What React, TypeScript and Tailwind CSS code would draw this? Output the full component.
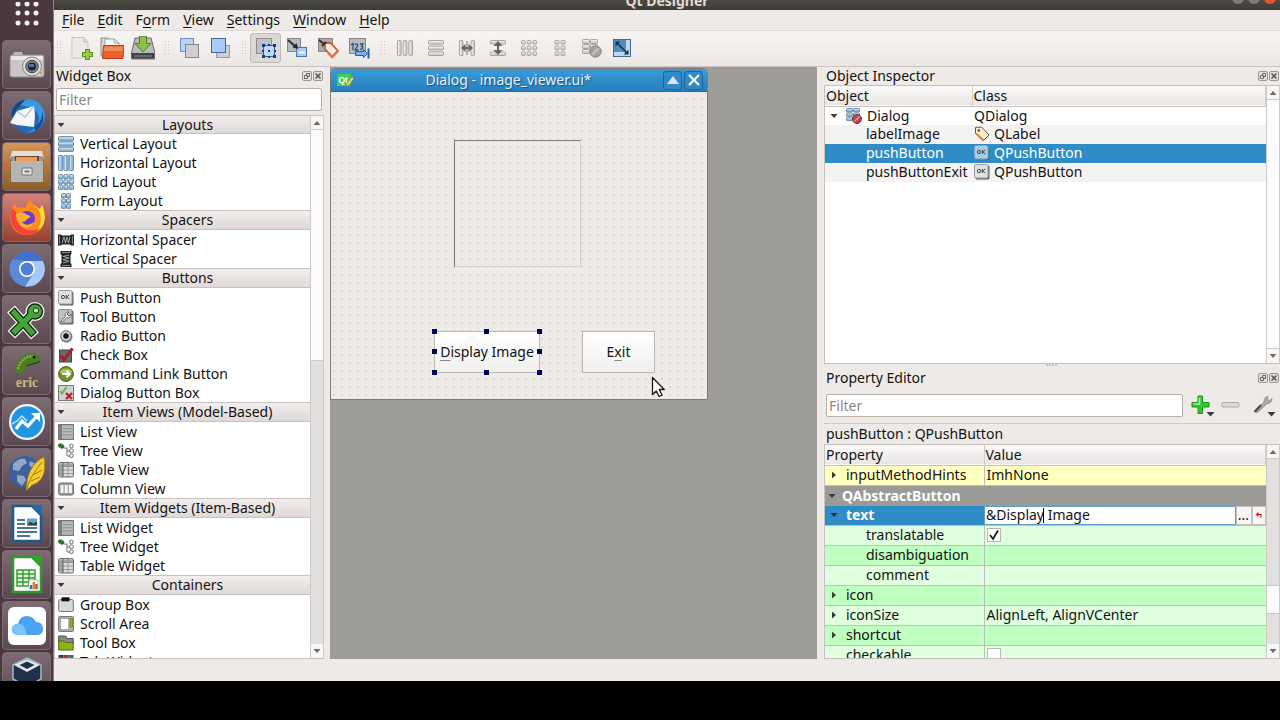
import React from "react";
import type { ReactNode } from "react";

/* ---------- small drawing helpers ---------- */

function Svg({ size = 16, box = 16, children }: { size?: number; box?: number; children: ReactNode }) {
  return (
    <svg width={size} height={size} viewBox={`0 0 ${box} ${box}`} className="shrink-0" aria-hidden="true">
      {children}
    </svg>
  );
}

type Palette = { a: string; b: string; line: string };
const BLUE: Palette = { a: "#bddaf0", b: "#8fb5d3", line: "#64879f" };
const GREY: Palette = { a: "#ebe9e8", b: "#d0cdca", line: "#a09d9a" };

function Cells({ cols, rows, x = 0.5, y = 0.5, w = 15, h = 15, gap = 1, p }: {
  cols: number; rows: number; x?: number; y?: number; w?: number; h?: number; gap?: number; p: Palette;
}) {
  const cw = (w - gap * (cols - 1)) / cols;
  const ch = (h - gap * (rows - 1)) / rows;
  const tall = ch > cw * 2;
  const out: ReactNode[] = [];
  for (let r = 0; r < rows; r++)
    for (let c = 0; c < cols; c++) {
      const cx = x + c * (cw + gap);
      const cy = y + r * (ch + gap);
      out.push(
        <g key={`${r}-${c}`}>
          <rect x={cx} y={cy} width={cw} height={ch} rx="0.8" fill={p.a} />
          {tall
            ? <rect x={cx + cw / 2} y={cy} width={cw / 2} height={ch} fill={p.b} />
            : <rect x={cx} y={cy + ch / 2} width={cw} height={ch / 2} fill={p.b} />}
          <rect x={cx} y={cy} width={cw} height={ch} rx="0.8" fill="none" stroke={p.line} strokeWidth="0.9" />
        </g>
      );
    }
  return <>{out}</>;
}

function OkBox({ tint = false }: { tint?: boolean }) {
  return (
    <Svg>
      <rect x="1.500" y="1.500" width="14" height="14" rx="1.500" fill={tint ? "#3f6f90" : "#5f6062"} />
      <rect x="0.500" y="0.500" width="13.500" height="13.500" rx="1.500" fill={tint ? "#a9cde5" : "#dfe0e2"} stroke={tint ? "#7aa5c2" : "#9b9b9d"} />
      <ellipse cx="5" cy="7" rx="1.600" ry="1.700" fill="none" stroke="#3a3a3c" strokeWidth="0.900" />
      <path d="M8.200 5v4M11.200 5L8.600 7l2.800 2" fill="none" stroke="#3a3a3c" strokeWidth="0.900" />
    </Svg>
  );
}

function ListIcon() {
  return (
    <Svg>
      <rect x="0.500" y="0.500" width="15" height="15" fill="#aeafaf" stroke="#77777a" />
      <rect x="1" y="1" width="3" height="14" fill="#7c7d7e" />
      <path d="M5 4.500h9M5 7.500h9M5 10.500h9" stroke="#909192" strokeWidth="0.800" />
      <path d="M5 3.500h9M5 6.500h9M5 9.500h9" stroke="#c6c7c8" strokeWidth="0.800" />
    </Svg>
  );
}

function TreeIcon() {
  return (
    <Svg>
      <ellipse cx="3.200" cy="3" rx="3" ry="2" transform="rotate(25 3.200 3)" fill="#2f7d3a" stroke="#1d4f26" strokeWidth="0.600" />
      <path d="M6 5l3 .3M9 4.500v8.500h3M9 8h3" fill="none" stroke="#777" strokeWidth="1" />
      <circle cx="13.400" cy="3" r="1.900" fill="#eee" stroke="#777" />
      <circle cx="13.400" cy="7.800" r="1.900" fill="#eee" stroke="#777" />
      <circle cx="13.400" cy="12.800" r="1.900" fill="#eee" stroke="#777" />
    </Svg>
  );
}

function TableIcon() {
  return (
    <Svg>
      <rect x="0.600" y="0.600" width="14.800" height="14.400" rx="1.500" fill="#dcdddd" stroke="#626365" />
      <path d="M1 1.500h14v3H1zM1 2h4v13H1z" fill="#a5a5a7" />
      <path d="M1 4.500h14M1 8h14M1 11.500h14M10 1v14" stroke="#8a8b8d" strokeWidth="0.800" />
      <path d="M5 1v14" stroke="#626365" />
    </Svg>
  );
}

const widgetIcons: Record<string, ReactNode> = {
  vlayout: <Svg><Cells cols={1} rows={3} p={BLUE} /></Svg>,
  hlayout: <Svg><Cells cols={3} rows={1} p={BLUE} /></Svg>,
  grid: <Svg><Cells cols={3} rows={3} p={BLUE} /></Svg>,
  form: <Svg><Cells cols={2} rows={3} x={3.5} w={9} p={BLUE} /></Svg>,
  hspacer: (
    <Svg>
      <path d="M0 2.500h3l1 1h8l1-1h3v11h-3l-1-1H4l-1 1H0z" fill="#26282a" />
      <path d="M1.500 4v8M14.500 4v8" stroke="#9aa0a3" strokeWidth="0.800" />
      <path d="M4 11l2-6 1.500 6 1.500-6 1.500 6 1.500-6" fill="none" stroke="#a9b5b8" strokeWidth="0.900" />
    </Svg>
  ),
  vspacer: (
    <Svg>
      <path d="M2.500 0h11v3l-1 1v8l1 1v3h-11v-3l1-1V4l-1-1z" fill="#26282a" />
      <path d="M4 1.500h8M4 14.500h8" stroke="#9aa0a3" strokeWidth="0.800" />
      <path d="M11 4L5 5.500 11 7 5 8.700l6 1.600-6 1.700" fill="none" stroke="#a9b5b8" strokeWidth="0.900" />
    </Svg>
  ),
  push: <OkBox />,
  tool: (
    <Svg>
      <rect x="1.500" y="1.500" width="14" height="14" rx="1.500" fill="#5f6062" />
      <rect x="0.500" y="0.500" width="13.500" height="13.500" rx="1.500" fill="#bfc0c3" stroke="#8b8b8d" />
      <path d="M2.500 12.500l5-5c-1-3 1-5 3.500-4.500L9 5l2 2 2-2c.4 2.500-1.500 4.500-4.300 3.700L4.500 13z" fill="#f2f2f2" stroke="#55565a" strokeWidth="0.900" />
    </Svg>
  ),
  radio: (
    <Svg>
      <circle cx="8.500" cy="8.700" r="6" fill="#8b8b8d" />
      <circle cx="8" cy="8" r="5.300" fill="#d0d1d2" stroke="#6a6b6d" />
      <circle cx="8" cy="8" r="2.700" fill="#141414" />
    </Svg>
  ),
  check: (
    <Svg>
      <rect x="1.500" y="3" width="12" height="12" fill="#676b6f" stroke="#44474a" />
      <path d="M3 8.500l3 4.500L14.500 1.500" fill="none" stroke="#b11c1f" strokeWidth="3" />
    </Svg>
  ),
  command: (
    <Svg>
      <circle cx="8" cy="8" r="7.400" fill="#75922a" stroke="#4d6317" />
      <path d="M1.500 6.500a7 6 0 0 1 13 0c-4 1.500-9 1.500-13 0z" fill="#adc45c" />
      <path d="M4 8h7.500M8.500 4.800L11.800 8l-3.300 3.200" fill="none" stroke="#fff" strokeWidth="2" />
    </Svg>
  ),
  buttonbox: (
    <Svg>
      <rect x="0.500" y="0.500" width="15" height="15" fill="#cfd0d1" stroke="#77777a" />
      <path d="M2 6l2 2.500L8.500 2" fill="none" stroke="#6fb045" strokeWidth="1.800" />
      <path d="M8 8l6 6M14 8l-6 6" stroke="#c01f25" strokeWidth="2.400" />
    </Svg>
  ),
  list: <ListIcon />,
  tree: <TreeIcon />,
  table: <TableIcon />,
  column: (
    <Svg>
      <rect x="0.700" y="2" width="14.800" height="12" rx="1.800" fill="#9c9d9f" stroke="#6c6d6f" />
      <path d="M2.500 4h3v8h-3zM6.700 4h3v8h-3zM10.900 4h3v8h-3z" fill="#f4f4f4" />
    </Svg>
  ),
  group: (
    <Svg>
      <rect x="0.700" y="2.500" width="14.600" height="12" rx="1.800" fill="#d8d9da" stroke="#707173" />
      <rect x="3.500" y="0.300" width="8" height="4" fill="#111" />
    </Svg>
  ),
  scroll: (
    <Svg>
      <rect x="0.600" y="0.600" width="14.800" height="14.800" rx="1" fill="#b3b4b5" stroke="#6f6f71" />
      <rect x="2.800" y="2.500" width="8" height="11" fill="#fff" stroke="#7e7e80" strokeWidth="0.600" />
      <rect x="12" y="2.500" width="2.500" height="9" fill="#91ad2d" stroke="#5d7416" strokeWidth="0.500" />
    </Svg>
  ),
  toolbox: (
    <Svg>
      <path d="M0.700 1h7l1.500 2.500h6v5H0.700z" fill="#86888a" stroke="#4d4f50" />
      <path d="M0.700 6h5.500l1.500 1.500h7.500v7.500H0.700z" fill="#8ab51a" stroke="#4d6a0d" />
    </Svg>
  ),
  tab: (
    <Svg>
      <path d="M0.500 1h5v3h-5z" fill="#3a3a3c" />
      <path d="M5.500 1h5v3h-5z" fill="#b02a2a" />
      <path d="M10.500 1h5v3h-5z" fill="#356a9c" />
      <path d="M0.500 4h15v11.500h-15z" fill="#ddd" stroke="#666" />
    </Svg>
  ),
};

/* ---------- launcher ---------- */

const launcherItems: { name: string; tile: string; running?: boolean; art: ReactNode }[] = [
  {
    name: "Camera", tile: "from-[#7d6c73] to-[#5c4851]",
    art: (
      <>
        <rect x="1" y="8" width="34" height="22" rx="2" fill="#c9c8c6" stroke="#8d8b89" />
        <path d="M4 8l1-3h8l1 3z" fill="#b9b8b6" />
        <rect x="2" y="9" width="32" height="4" fill="#e8e7e6" />
        <circle cx="23" cy="19.500" r="9.500" fill="#dddcda" stroke="#858381" />
        <circle cx="23" cy="19.500" r="6.300" fill="#80828a" stroke="#44464d" />
        <circle cx="23" cy="19.500" r="4" fill="#1c2230" />
        <rect x="20" y="17" width="5" height="3" fill="#5372a8" />
        <circle cx="32" cy="26" r="1.200" fill="#e59a3c" />
      </>
    ),
  },
  {
    name: "Thunderbird", tile: "from-[#7d6c73] to-[#5c4851]",
    art: (
      <>
        <circle cx="19" cy="18" r="17" fill="#2567b1" />
        <path d="M19 1c10 0 17 8 17 17.500C35 28 27 35 17 34.500c8-2 13-6 13-13S25 9 11 7c2-3 5-6 8-6z" fill="#3d97de" />
        <path d="M3 20C1 10 8 3 16 2L8 11z" fill="#174886" />
        <path d="M1 25l7-12 17-5 1 9-1 12-17-2z" fill="#f4f6fa" />
        <path d="M8 13l8 6 9-11" fill="none" stroke="#b6c3d6" strokeWidth="1.300" />
        <path d="M26 29c5-4 8-10 7-16 3 8 1 16-7 20z" fill="#174f94" />
      </>
    ),
  },
  {
    name: "Files", tile: "from-[#d69559] to-[#8e5c25]", running: true,
    art: (
      <>
        <path d="M3 2h30l2 8H1z" fill="#dededc" />
        <rect x="2" y="8" width="32" height="25" rx="1.500" fill="#9c9c9a" stroke="#72716f" />
        <rect x="6" y="7" width="24" height="6" fill="#70402a" />
        <path d="M7 8h21v4H7z" fill="#ef9a55" />
        <rect x="2" y="12" width="32" height="21" fill="#b5b5b3" />
        <rect x="13" y="19" width="10" height="7" rx="1" fill="#e7e7e5" stroke="#737371" />
        <rect x="15.500" y="21.500" width="5" height="2" fill="#727270" />
      </>
    ),
  },
  {
    name: "Firefox", tile: "from-[#d4827b] to-[#98402f]", running: true,
    art: (
      <>
        <path d="M3 8c1-2 2-3 3-4l2 4c3-1 6-1 9 0 0-4 2-7 5-8 1 4 5 6 8 9l3-4c6 14 1 29-14 30C5 36-2 23 3 8z" fill="#ff8a1e" />
        <path d="M22 0c1 5 6 7 8 11 4 8 1 18-5 22 10-3 14-15 8-28l-2 4C28 7 23 5 22 0z" fill="#ffd93b" />
        <path d="M3 8C-1 22 5 34 18 35c6 0 11-3 13-7-8 5-19 2-21-6L7 12z" fill="#f4433f" />
        <circle cx="18" cy="19" r="8" fill="#6a3fc4" />
        <path d="M7 14c4-2 8-2 11 1 3 0 4 2 2 3-3 1-3 4-7 4 2 3 7 4 12 0-1 6-11 8-15 2-2-3-3-6-3-10z" fill="#ffb02b" />
      </>
    ),
  },
  {
    name: "Chromium", tile: "from-[#7d6c73] to-[#5c4851]",
    art: (
      <>
        <circle cx="18" cy="18" r="17.500" fill="#5b8ad9" />
        <path d="M18 10h15.800A17.500 17.500 0 0 0 4 8z" fill="#4071c6" />
        <path d="M33.800 10A17.500 17.500 0 0 1 16 35.400l9-13.400c1-5-1-9-7-12z" fill="#a8c8f6" />
        <circle cx="18" cy="18" r="8" fill="#fff" />
        <circle cx="18" cy="18" r="6.400" fill="#4c80d8" />
      </>
    ),
  },
  {
    name: "Tools", tile: "from-[#7d6c73] to-[#5c4851]",
    art: (
      <>
        <path d="M5.500 11l17 19M6 29L24 11" stroke="#f6f6f4" strokeWidth="10.500" strokeLinecap="square" />
        <circle cx="26" cy="9.500" r="9.500" fill="#f6f6f4" />
        <path d="M5.500 11l17 19M6 29L24 11" stroke="#14260f" strokeWidth="8" strokeLinecap="square" />
        <circle cx="26" cy="9.500" r="8.200" fill="#14260f" />
        <path d="M5.500 11l17 19M6 29L24 11" stroke="#45a53a" strokeWidth="5.500" strokeLinecap="square" />
        <circle cx="26" cy="9.500" r="6.800" fill="#45a53a" />
        <circle cx="27" cy="8.500" r="2.600" fill="#dcefd6" stroke="#14260f" />
      </>
    ),
  },
  {
    name: "Eric", tile: "from-[#7d6c73] to-[#5c4851]",
    art: (
      <>
        <path d="M5 20C6 9 13 -1 23 0c6 0 10 4 8 8-2 4-6 3-10 4-5 2-5 5-7 8z" fill="#4c7a28" />
        <path d="M9 16C11 8 16 3 25 3" fill="none" stroke="#8fae45" strokeWidth="2.500" strokeDasharray="2 1" />
        <path d="M31 8c-4 4-9 2-13 5" fill="none" stroke="#26410f" strokeWidth="1.300" />
        <circle cx="25" cy="4" r="1.500" fill="#14200a" />
        <text x="18" y="34" textAnchor="middle" fontSize="14" fontWeight="700" fontFamily="Liberation Serif, serif" fill="#c8b878">eric</text>
      </>
    ),
  },
  {
    name: "Monitor", tile: "from-[#7d6c73] to-[#5c4851]",
    art: (
      <>
        <circle cx="18" cy="18" r="18" fill="#f3f7fa" />
        <circle cx="18" cy="18" r="15.800" fill="#2295e0" />
        <path d="M7 25l6-8 6 5 9-10" fill="none" stroke="#fff" strokeWidth="3.200" />
        <path d="M22 9h9v9z" fill="#fff" />
        <path d="M3 20l5-3 5-5 5 5" fill="none" stroke="#bfe2f8" strokeWidth="1.500" />
      </>
    ),
  },
  {
    name: "Globe", tile: "from-[#7d6c73] to-[#5c4851]",
    art: (
      <>
        <circle cx="16" cy="17" r="16" fill="#3c5f9d" />
        <path d="M4 9c4-4 8-6 12-5l2 4-5 3-3 5-6-1zM8 20l7 1 2 4-4 6-5-5zM21 6l6 3 3 7-6-2-4-4z" fill="#93a6c6" />
        <path d="M18 35C16 22 24 6 35 2c2 12 1 24-12 28z" fill="#f2cd35" stroke="#a67d12" />
        <path d="M17 36c3-11 9-20 16-29M22 26l9-4M24 20l9-5" fill="none" stroke="#a67d12" />
      </>
    ),
  },
  {
    name: "Writer", tile: "from-[#7d6c73] to-[#5c4851]",
    art: (
      <>
        <path d="M4 0h19l9 9v26H4z" fill="#fcfcfc" stroke="#1c5c8c" strokeWidth="2.500" />
        <path d="M22 -1h11v11z" fill="#1a6fae" />
        <path d="M8 14h8M8 18h8M8 22h20M8 26h20M8 30h13" stroke="#1b4667" strokeWidth="1.600" />
        <rect x="18" y="12.500" width="10" height="7" fill="#5fa5d6" />
        <path d="M18 19.500l3-4 3 2 4-2v4z" fill="#234d33" />
      </>
    ),
  },
  {
    name: "Calc", tile: "from-[#7d6c73] to-[#5c4851]",
    art: (
      <>
        <path d="M4 0h19l9 9v26H4z" fill="#fcfcfc" stroke="#2f9a2b" strokeWidth="2.500" />
        <path d="M22 -1h11v11z" fill="#2da428" />
        <path d="M8 13h18v16H8z" fill="#e4f6dd" stroke="#3d9a35" strokeWidth="1.500" />
        <path d="M8 17h18M8 21h18M8 25h18M14 13v16M20 13v16" stroke="#3d9a35" strokeWidth="1.500" />
        <rect x="20" y="23" width="9" height="9" fill="#fff" stroke="#999" strokeWidth="0.600" />
        <path d="M21 32v-4h2.300v4z" fill="#3874b5" />
        <path d="M23.600 32v-7h2.300v7z" fill="#dd7a2c" />
        <path d="M26.200 32v-5h2.300v5z" fill="#8f5f3e" />
      </>
    ),
  },
  {
    name: "iCloud", tile: "from-[#7d6c73] to-[#5c4851]",
    art: (
      <>
        <rect x="-1" y="-1" width="38" height="38" rx="6" fill="#fdfdfd" />
        <path d="M8 27c-4-1-6-4-5-7 1-3 3-4 6-4 1-5 4-8 9-8 4 0 7 2 9 6 5 0 7 3 7 7s-3 6-6 6z" fill="#4ba3f3" />
        <path d="M8 27c-4-1-6-4-5-7 1-3 3-4 6-4 5-1 7 3 9 11z" fill="#79c4fb" />
      </>
    ),
  },
  {
    name: "VirtualBox", tile: "from-[#7d6c73] to-[#5c4851]",
    art: (
      <>
        <path d="M18 -1l14 7v14l-14 8-14-8V6z" fill="#20314a" stroke="#a9b8c8" strokeWidth="1.500" />
        <path d="M18 0l13 6-13 7L5 6z" fill="#dfe6ec" />
        <path d="M18 2.500l7.500 3.500L18 10l-7.500-4z" fill="#20314a" />
      </>
    ),
  },
];

function Launcher() {
  return (
    <nav aria-label="Launcher" className="flex w-[54px] shrink-0 flex-col overflow-hidden border-r border-[#8a8286] bg-[#4a3740]">
      <button aria-label="Show applications" className="flex h-10 shrink-0 items-start justify-center pt-[2px]">
        <svg width="24" height="26" viewBox="0 0 24 26" fill="#f4f1f2" aria-hidden="true">
          {[2, 11, 21].map((y) => [3, 12, 21].map((x) => <circle key={`${x}-${y}`} cx={x} cy={y} r="2.500" />))}
        </svg>
      </button>
      <ul className="flex flex-col gap-[2px] px-[2px]">
        {launcherItems.map((it) => (
          <li key={it.name}>
            <button aria-label={it.name} className={`relative flex h-[49px] w-full items-center justify-center rounded border border-[#7b6b72] bg-linear-to-b ${it.tile}`}>
              <svg width="36" height="36" viewBox="0 0 36 36" overflow="visible" aria-hidden="true">{it.art}</svg>
              {it.running && <span className="absolute left-0 top-5 size-[5px] rounded-full bg-[#e8543c]" />}
            </button>
          </li>
        ))}
      </ul>
    </nav>
  );
}

/* ---------- menu and toolbar ---------- */

const menus: [string, string, string][] = [
  ["", "F", "ile"], ["", "E", "dit"], ["F", "o", "rm"], ["", "V", "iew"], ["", "S", "ettings"], ["", "W", "indow"], ["", "H", "elp"],
];

type Tool = { label: string; icon: ReactNode; pressed?: boolean };

const toolGroups: Tool[][] = [
  [
    {
      label: "New",
      icon: (
        <>
          <path d="M3 1.500h12l4 4.500v16H3z" fill="#ecebe9" stroke="#c6c5c2" />
          <path d="M15 1.500V6h4" fill="#d9d8d5" stroke="#c6c5c2" />
          <path d="M18.500 13v11M13 18.500h11" stroke="#5f9420" strokeWidth="5" />
          <path d="M18.500 14v9M14 18.500h9" stroke="#98cf42" strokeWidth="2.800" />
        </>
      ),
    },
    {
      label: "Open",
      icon: (
        <>
          <path d="M1 2h7l2 2h3v16H1z" fill="#d8d7d5" stroke="#908e8b" />
          <path d="M5 3h9l5 4v6H5z" fill="#fafafa" stroke="#a2a09d" />
          <path d="M14 3v4h5" fill="none" stroke="#a2a09d" />
          <path d="M3.500 9.500h20.500l-1 13H2.500z" fill="#e9602c" stroke="#b6441a" />
          <path d="M4.500 10.500h18.500l-.5 4.500H4z" fill="#f38a57" />
        </>
      ),
    },
    {
      label: "Save",
      icon: (
        <>
          <path d="M4 2h16l4 15v6H0.500v-6z" fill="#b9babb" stroke="#6a6b6c" />
          <path d="M1 17h22.500v5.500H1z" fill="#3f4143" />
          <path d="M3 20h18" stroke="#8d8f91" />
          <path d="M8.500 0h7v7.500H20L12 16 4 7.500h4.500z" fill="#8dc04a" stroke="#547f20" />
        </>
      ),
    },
  ],
  [
    {
      label: "Send to Back",
      icon: (
        <>
          <rect x="3.500" y="2.500" width="13" height="13" fill="#b8d4f4" stroke="#6a93c4" />
          <rect x="8.500" y="8.500" width="13" height="13" fill="#cccecf" stroke="#85878a" />
        </>
      ),
    },
    {
      label: "Bring to Front",
      icon: (
        <>
          <rect x="8.500" y="9.500" width="13" height="12" fill="#ccd0d4" stroke="#9a9b9d" />
          <rect x="3.500" y="2.500" width="14" height="14" fill="#a9cbf5" stroke="#41699c" />
        </>
      ),
    },
  ],
  [
    {
      label: "Edit Widgets", pressed: true,
      icon: (
        <>
          <rect x="2.500" y="2.500" width="15" height="15" fill="#bfc1c4" stroke="#8d8f92" />
          <rect x="9.500" y="9.500" width="11" height="11" fill="#bcd8fa" stroke="#3567a5" />
          <path d="M8 8h3v3H8zM14 8h2v2h-2zM19 8h3v3h-3zM8 14h2v2H8zM20 14h2v2h-2zM8 19h3v3H8zM14 20h2v2h-2zM19 19h3v3h-3zM14 14h2v2h-2z" fill="#173c6e" />
        </>
      ),
    },
    {
      label: "Edit Signals/Slots",
      icon: (
        <>
          <rect x="2.500" y="2.500" width="13" height="13" fill="#b9bbbf" stroke="#85878b" />
          <rect x="11.500" y="11.500" width="10" height="9" fill="#a9cbf2" stroke="#4a78ad" />
          <path d="M14 16.500h6" stroke="#fff" strokeWidth="1.800" />
          <path d="M3 4l8 7" stroke="#1d2b3e" strokeWidth="2" />
          <path d="M13.500 13l-6-1.500 4-4.500z" fill="#1d2b3e" />
        </>
      ),
    },
    {
      label: "Edit Buddies",
      icon: (
        <>
          <rect x="2.500" y="2.500" width="14" height="13" fill="#a9abae" stroke="#85878b" />
          <path d="M9 7h5.500l7.500 8-5.500 6L9 13z" fill="#f7ede6" stroke="#cb5a24" strokeWidth="1.800" />
          <path d="M12 17l4 4 5.800-6.200" fill="none" stroke="#e8763c" strokeWidth="2.200" />
          <path d="M3 4l5 4M6 10l4-4" stroke="#3b2c28" strokeWidth="2" />
        </>
      ),
    },
    {
      label: "Edit Tab Order",
      icon: (
        <>
          <rect x="2.500" y="2.500" width="16" height="15" fill="#b9bbbf" stroke="#85878b" />
          <path d="M4 9l2-1.500V14M8 9c1-2 3.500-1 2.500 1L8 14h3.500M13 8h3l-1.500 2.500c2 .5 2 3-1.500 3" fill="none" stroke="#274e85" strokeWidth="1.300" />
          <path d="M8.500 15.500h8v-2l4 4-4 4v-2h-8z" fill="#7db2ee" stroke="#2b5d9c" />
          <path d="M21.500 12.500v10" stroke="#2b5d9c" strokeWidth="2" />
        </>
      ),
    },
  ],
  [
    { label: "Lay Out Horizontally", icon: <Cells cols={3} rows={1} x={4.5} y={4.5} w={15} h={15} gap={2} p={GREY} /> },
    { label: "Lay Out Vertically", icon: <Cells cols={1} rows={3} x={4.5} y={4.5} w={15} h={15} gap={2} p={GREY} /> },
    {
      label: "Lay Out Horizontally in Splitter",
      icon: (
        <>
          <Cells cols={2} rows={1} x={4.5} y={4.5} w={15} h={15} gap={8} p={GREY} />
          <path d="M12 5v14" stroke="#9d9a97" strokeWidth="1.500" />
          <path d="M7 12h10" stroke="#676462" strokeWidth="1.800" />
          <path d="M6 12l4.500-4v8zM18 12l-4.500-4v8z" fill="#676462" />
        </>
      ),
    },
    {
      label: "Lay Out Vertically in Splitter",
      icon: (
        <>
          <Cells cols={1} rows={2} x={4.5} y={4.5} w={15} h={15} gap={8} p={GREY} />
          <path d="M12 8v9" stroke="#676462" strokeWidth="2" />
          <path d="M12 5l4.500 5h-9zM12 19l4.500-5h-9z" fill="#676462" />
        </>
      ),
    },
    { label: "Lay Out in a Grid", icon: <Cells cols={3} rows={3} x={4.5} y={4.5} w={15} h={15} gap={2} p={GREY} /> },
    { label: "Lay Out in a Form", icon: <Cells cols={2} rows={3} x={7} y={4.5} w={10} h={15} gap={2} p={GREY} /> },
    {
      label: "Break Layout",
      icon: (
        <>
          <Cells cols={2} rows={3} x={3.5} y={3.5} w={15} h={14} gap={1} p={GREY} />
          <circle cx="16.500" cy="15.500" r="5.700" fill="#a5a29f" stroke="#8a8784" />
          <path d="M13.500 18.500l6-6" stroke="#c9c6c3" strokeWidth="1.800" />
        </>
      ),
    },
    {
      label: "Adjust Size",
      icon: (
        <>
          <rect x="3.500" y="3.500" width="17" height="17" fill="#c6d7e3" stroke="#3f6e92" />
          <path d="M4 4h12v12H4z" fill="#4f8ec2" />
          <path d="M7 7l10 10" stroke="#0d3a44" strokeWidth="1.600" />
          <path d="M5.500 5.500h5l-5 5zM18.500 18.500h-5l5-5z" fill="#0d3a44" />
        </>
      ),
    },
  ],
];

function Grip({ first }: { first?: boolean }) {
  return (
    <span className={`flex justify-end pr-[3px] ${first ? "w-[11px]" : "w-[15px]"}`}>
      <svg width="5" height="14" viewBox="0 0 5 14" fill="#cbc6c2" aria-hidden="true">
        {[0, 3, 6, 9, 12].map((y) => [0, 3].map((x) => <rect key={`${x}-${y}`} x={x} y={y} width="1" height="1" />))}
      </svg>
    </span>
  );
}

/* ---------- shared panel pieces ---------- */

function Arrow({ dir, className = "text-[#3c3b37]" }: { dir: "up" | "down" | "right"; className?: string }) {
  const d = { up: "M0.500 6L4 2l3.500 4z", down: "M0.500 2L4 6l3.500-4z", right: "M2 0.500L6 4 2 7.500z" }[dir];
  return (
    <svg width="8" height="8" viewBox="0 0 8 8" className={`shrink-0 ${className}`} aria-hidden="true">
      <path d={d} fill="currentColor" />
    </svg>
  );
}

function DockTitle({ children }: { children: ReactNode }) {
  const btn = "flex size-[10px] items-center justify-center rounded-[2px] border border-[#9b9793] bg-[#e3dfdc]";
  return (
    <header className="flex h-[18px] shrink-0 items-center pr-px pl-[2px]">
      <h2 className="flex-1">{children}</h2>
      <div className="flex gap-px">
        <button aria-label="Float" className={btn}>
          <svg width="6" height="6" viewBox="0 0 6 6" fill="none" stroke="#6b6764" aria-hidden="true"><path d="M.5 2.500h3v3h-3zM2.500 2.500v-2h3v3h-2" /></svg>
        </button>
        <button aria-label="Close" className={btn}>
          <svg width="6" height="6" viewBox="0 0 6 6" stroke="#55524f" strokeWidth="1.500" aria-hidden="true"><path d="M.5.5l5 5M5.500.5l-5 5" /></svg>
        </button>
      </div>
    </header>
  );
}

function ScrollBar({ thumbPlace }: { thumbPlace: string }) {
  return (
    <div className="flex w-[14px] shrink-0 flex-col border-x border-[#cfcac7] bg-[#e2e0de]">
      <button aria-label="Scroll up" className="flex h-[14px] shrink-0 items-center justify-center border-b border-[#cfcac7] bg-[#f8f7f6]"><Arrow dir="up" className="text-[#6d6a67]" /></button>
      <div className="flex min-h-0 flex-1 flex-col">
        <div className={`border-b border-[#cfcac7] bg-[#fcfbfb] ${thumbPlace}`} />
      </div>
      <button aria-label="Scroll down" className="flex h-[14px] shrink-0 items-center justify-center bg-[#f8f7f6]"><Arrow dir="down" className="text-[#6d6a67]" /></button>
    </div>
  );
}

/* ---------- widget box ---------- */

const sections: { title: string; items: [string, string][] }[] = [
  { title: "Layouts", items: [["vlayout", "Vertical Layout"], ["hlayout", "Horizontal Layout"], ["grid", "Grid Layout"], ["form", "Form Layout"]] },
  { title: "Spacers", items: [["hspacer", "Horizontal Spacer"], ["vspacer", "Vertical Spacer"]] },
  { title: "Buttons", items: [["push", "Push Button"], ["tool", "Tool Button"], ["radio", "Radio Button"], ["check", "Check Box"], ["command", "Command Link Button"], ["buttonbox", "Dialog Button Box"]] },
  { title: "Item Views (Model-Based)", items: [["list", "List View"], ["tree", "Tree View"], ["table", "Table View"], ["column", "Column View"]] },
  { title: "Item Widgets (Item-Based)", items: [["list", "List Widget"], ["tree", "Tree Widget"], ["table", "Table Widget"]] },
  { title: "Containers", items: [["group", "Group Box"], ["scroll", "Scroll Area"], ["toolbox", "Tool Box"], ["tab", "Tab Widget"]] },
];

function WidgetBox() {
  return (
    <aside className="flex w-[276px] shrink-0 flex-col pr-[6px]">
      <DockTitle>Widget Box</DockTitle>
      <div className="px-[2px] pt-[3px] pb-1">
        <input aria-label="Filter widgets" placeholder="Filter" className="h-[23px] w-full rounded-[2px] border border-[#b5afab] bg-white px-[2px] placeholder:text-[#8a8785]" />
      </div>
      <div className="flex min-h-0 flex-1 border border-r-0 border-[#c6c1be] bg-white">
        <div className="min-w-0 flex-1 overflow-hidden">
          {sections.map((s, i) => (
            <section key={s.title}>
              <button className={`flex w-full items-center border-[#c9c2be] bg-linear-to-b from-[#f1eeed] to-[#dfdad8] pl-[2px] ${i === 0 ? "h-[18px] border-b" : "h-5 border-y"}`}>
                <Arrow dir="down" />
                <span className="flex-1 text-center">{s.title}</span>
              </button>
              <ul>
                {s.items.map(([icon, name]) => (
                  <li key={name} className="flex h-[19px] items-center gap-[6px] pl-[3px] whitespace-nowrap">
                    {widgetIcons[icon]}
                    {name}
                  </li>
                ))}
              </ul>
            </section>
          ))}
        </div>
        <ScrollBar thumbPlace="h-[231px]" />
      </div>
    </aside>
  );
}

/* ---------- form canvas ---------- */

const handles = [
  "left-[-3px] top-[-3px]", "left-1/2 top-[-3px] -ml-[3px]", "right-[-3px] top-[-3px]",
  "left-[-3px] top-1/2 -mt-[3px]", "right-[-3px] top-1/2 -mt-[3px]",
  "left-[-3px] bottom-[-3px]", "left-1/2 bottom-[-3px] -ml-[3px]", "right-[-3px] bottom-[-3px]",
];

function FormCanvas() {
  const formBtn = "absolute flex h-[42px] items-center justify-center border border-[#bdb8b5] bg-linear-to-b from-white to-[#efefee]";
  return (
    <main className="relative min-w-0 flex-1 overflow-hidden bg-[#9e9c97]">
      <div className="absolute left-0 top-px flex h-[332px] w-[378px] flex-col overflow-hidden rounded-t-[5px] border border-[#7c7a76] bg-[#eeeae7]">
        <div className="flex h-[23px] shrink-0 items-center border-b border-[#1f6ca3] bg-linear-to-b from-[#3b9bd9] to-[#2680bd] pr-1 pl-[5px] text-white">
          <svg width="18" height="16" viewBox="0 0 18 16" aria-hidden="true">
            <path d="M2 2h13v10l-2 2H1V4z" fill="#41cd52" />
            <text x="2.500" y="10.500" fontSize="8.500" fontWeight="700" fontFamily="Liberation Sans, sans-serif" fill="#fff">Qt</text>
            <path d="M10 14.500l1-3.500 5-6 2 1.500-5 6.500z" fill="#e4d978" stroke="#8b7d2c" strokeWidth="0.600" />
          </svg>
          <h1 className="flex-1 text-center text-[#e8f2f9] [text-shadow:1px_1px_1px_#14507d]">Dialog - image_viewer.ui*</h1>
          <button aria-label="Shade" className="mr-[2px] flex size-[19px] items-center justify-center rounded-[3px] border border-[#1c639a] bg-[#3289c6]">
            <svg width="12" height="8" viewBox="0 0 12 8" aria-hidden="true"><path d="M0 8l6-8 6 8z" fill="#d3e9f8" /></svg>
          </button>
          <button aria-label="Close form" className="flex size-[19px] items-center justify-center rounded-[3px] border border-[#1c639a] bg-[#3289c6]">
            <svg width="12" height="12" viewBox="0 0 12 12" stroke="#fff" strokeWidth="2" aria-hidden="true"><path d="M1 1l10 10M11 1L1 11" /></svg>
          </button>
        </div>
        <div className="relative flex-1 bg-[radial-gradient(circle_at_3px_7px,#d8d3d0_0.7px,transparent_1.2px)] bg-size-[8px_8px]">
          <div className="absolute left-[123px] top-[48px] h-[127px] w-[127px] border border-t-[#7c7975] border-l-[#7c7975] border-r-[#d6d2cf] border-b-[#d6d2cf]" />
          <button className={`${formBtn} left-[103px] top-[239px] w-[106px]`}>
            <span><u className="decoration-[#8a8784] underline-offset-3">D</u>isplay Image</span>
            {handles.map((h) => <span key={h} className={`absolute size-[5px] bg-[#00005e] ${h}`} />)}
          </button>
          <button className={`${formBtn} left-[251px] top-[239px] w-[73px]`}>
            <span>E<u className="decoration-[#8a8784] underline-offset-3">x</u>it</span>
          </button>
          <svg width="14" height="22" viewBox="0 0 14 22" className="absolute left-[320px] top-[284px]" aria-hidden="true">
            <path d="M1.500 1.500v17l3.800-3.500 2.700 5.500 3-1.300-2.700-5.700h5z" fill="#fff" stroke="#1b1b1b" strokeWidth="1.300" strokeLinejoin="round" />
          </svg>
        </div>
      </div>
    </main>
  );
}

/* ---------- object inspector ---------- */

const labelTag = (
  <Svg>
    <path d="M1.500 1.500l6-.5 7.500 8-5.500 5.500-8-7z" fill="#f6e8d3" stroke="#6b5638" />
    <path d="M2 7.500l7.500 7" stroke="#c88b3c" strokeWidth="2" />
    <circle cx="4.800" cy="4.500" r="1.200" fill="#5d4a30" />
  </Svg>
);

const dialogIcon = (
  <Svg>
    <Cells cols={2} rows={3} x={0.5} y={0.5} w={13} h={12} p={BLUE} />
    <circle cx="11" cy="11" r="4.500" fill="#b8484c" stroke="#8b2f34" />
    <path d="M8.500 13.500l5-5" stroke="#d99a9c" strokeWidth="1.300" />
  </Svg>
);

const objects: { name: string; cls: string; icon?: ReactNode; selected?: boolean }[] = [
  { name: "labelImage", cls: "QLabel", icon: labelTag },
  { name: "pushButton", cls: "QPushButton", icon: <OkBox tint />, selected: true },
  { name: "pushButtonExit", cls: "QPushButton", icon: <OkBox /> },
];

const headCell = "border-r border-[#d3cecb] p-0 pl-px text-left font-normal";

function ObjectInspector() {
  return (
    <section className="flex h-[297px] shrink-0 flex-col">
      <DockTitle>Object Inspector</DockTitle>
      <div className="flex min-h-0 flex-1 border border-r-0 border-[#c6c1be] bg-white">
        <div className="min-w-0 flex-1">
          <table className="w-full table-fixed border-collapse">
            <thead>
              <tr className="h-[20px] border-b border-[#c6c1be] bg-linear-to-b from-[#fbfafa] to-[#e9e6e4]">
                <th className={`${headCell} w-[147px]`}>Object</th>
                <th className={headCell}>Class</th>
              </tr>
            </thead>
            <tbody>
              <tr>
                <td className="p-0 pl-[5px]">
                  <div className="flex h-[18px] items-center"><Arrow dir="down" /><span className="w-2" />{dialogIcon}<span className="pl-[5px]">Dialog</span></div>
                </td>
                <td className="p-0 pl-[2px]">QDialog</td>
              </tr>
              {objects.map((o) => (
                <tr key={o.name} className={o.selected ? "bg-[#308cc6] text-white" : "bg-[#f5f3f2]"}>
                  <td className="p-0 pl-[41px] whitespace-nowrap"><div className="flex h-[19px] items-center">{o.name}</div></td>
                  <td className="p-0 pl-[2px]"><div className="flex h-[19px] items-center gap-1">{o.icon}<span>{o.cls}</span></div></td>
                </tr>
              ))}
            </tbody>
          </table>
        </div>
        <ScrollBar thumbPlace="flex-1" />
      </div>
    </section>
  );
}

/* ---------- property editor ---------- */

type Row = { name: string; tone: string; arrow?: boolean; child?: boolean; value?: ReactNode };
const LIGHT = "bg-[#dfffdf]";
const DARK = "bg-[#bfffbf]";

const rowsAfter: Row[] = [
  { name: "translatable", tone: LIGHT, child: true, value: <TickBox label="translatable" on /> },
  { name: "disambiguation", tone: DARK, child: true },
  { name: "comment", tone: LIGHT, child: true },
  { name: "icon", tone: DARK, arrow: true },
  { name: "iconSize", tone: LIGHT, arrow: true, value: "AlignLeft, AlignVCenter" },
  { name: "shortcut", tone: DARK, arrow: true },
  { name: "checkable", tone: LIGHT, value: <TickBox label="checkable" /> },
];

function TickBox({ label, on = false }: { label: string; on?: boolean }) {
  return (
    <span className="relative flex size-[14px]">
      <input type="checkbox" aria-label={label} defaultChecked={on} className="peer size-[14px] appearance-none border border-[#b9b6b3] bg-white" />
      <svg width="14" height="14" viewBox="0 0 14 14" className="pointer-events-none absolute inset-0 hidden peer-checked:block" aria-hidden="true">
        <path d="M3 7l3 4 5-8.500" fill="none" stroke="#1b1b1b" strokeWidth="1.800" />
      </svg>
    </span>
  );
}

function PropertyRow({ row }: { row: Row }) {
  return (
    <tr className={`border-b border-[#b9c4b6] ${row.tone}`}>
      <td className="border-r border-[#b9c4b6] p-0">
        <div className={`flex h-[19px] items-center ${row.child ? "pl-[41px]" : "pl-[5px]"}`}>
          {row.arrow && <Arrow dir="right" />}
          <span className={row.child ? "" : row.arrow ? "pl-2" : "pl-4"}>{row.name}</span>
        </div>
      </td>
      <td className="p-0 pl-[2px]"><div className="flex h-[19px] items-center">{row.value}</div></td>
    </tr>
  );
}

function PropertyEditor() {
  return (
    <section className="flex min-h-0 flex-1 flex-col">
      <div className="mx-auto h-[5px] w-3 shrink-0 bg-[radial-gradient(circle_at_1px_1px,#c9c4c0_0.8px,transparent_1px)] bg-size-[3px_5px]" />
      <DockTitle>Property Editor</DockTitle>
      <div className="flex shrink-0 items-center py-[6px] pl-[2px]">
        <input aria-label="Filter properties" placeholder="Filter" className="h-[23px] min-w-0 flex-1 rounded-[2px] border border-[#b5afab] bg-white px-[2px] placeholder:text-[#8a8785]" />
        <button aria-label="Add dynamic property" className="flex h-6 w-8 items-center justify-end">
          <svg width="24" height="24" viewBox="0 0 24 24" aria-hidden="true">
            <path d="M7 3h4.500v6.500H18V14h-6.500v6.500H7V14H1V9.500h6z" fill="#2fc92b" stroke="#1f9421" />
            <path d="M8.500 4.500v6.500H2.500" fill="none" stroke="#a6f29c" strokeWidth="1.500" />
            <path d="M15.500 19h8l-4 4.500z" fill="#3c3b37" />
          </svg>
        </button>
        <button aria-label="Remove dynamic property" className="flex h-6 w-8 items-center justify-center">
          <svg width="20" height="8" viewBox="0 0 20 8" aria-hidden="true"><rect x="1" y="1.500" width="17" height="4.500" rx="1" fill="#dcdad8" stroke="#aeaba8" /></svg>
        </button>
        <button aria-label="Configure" className="flex h-6 w-[33px] items-center justify-center">
          <svg width="24" height="24" viewBox="0 0 24 24" aria-hidden="true">
            <path d="M3 18l9-9c-.500-3 1.500-5 4-5.500l-.5 3 2 1.200 2.500-2c.2 3-2 5-5 5L5 20z" fill="#a9aaab" stroke="#808182" strokeWidth="0.700" />
            <path d="M2.500 19l6.500-7" stroke="#4b4c4d" strokeWidth="2.200" />
            <path d="M15.500 19h8l-4 4.500z" fill="#3c3b37" />
          </svg>
        </button>
      </div>
      <p className="flex h-[21px] shrink-0 items-center border-t border-[#d0cbc8] pl-[2px]">pushButton : QPushButton</p>
      <div className="flex min-h-0 flex-1 border border-r-0 border-[#c6c1be]">
        <div className="min-w-0 flex-1 overflow-hidden">
          <table className="w-full table-fixed border-collapse">
            <thead>
              <tr className="h-[20px] border-b border-[#c6c1be] bg-linear-to-b from-[#fbfafa] to-[#e9e6e4]">
                <th className={`${headCell} w-[159px]`}>Property</th>
                <th className={headCell}>Value</th>
              </tr>
            </thead>
            <tbody>
              <PropertyRow row={{ name: "inputMethodHints", tone: "bg-[#ffffbf]", arrow: true, value: "ImhNone" }} />
              <tr className="bg-[#9c9a96] font-bold text-white">
                <td colSpan={2} className="p-0 pl-[3px]">
                  <div className="flex h-5 items-center"><Arrow dir="down" /><span className="pl-[6px]">QAbstractButton</span></div>
                </td>
              </tr>
              <tr className="border-b border-[#b9c4b6] bg-[#308cc6]">
                <td className="p-0 pl-[5px] font-bold text-white"><div className="flex h-[19px] items-center"><Arrow dir="down" className="text-[#14314a]" /><span className="pl-2">text</span></div></td>
                <td className="p-0">
                  <div className="flex h-[19px] items-stretch bg-[#eeeae7]">
                    <div className="relative min-w-0 flex-1">
                      <input aria-label="text" defaultValue="&Display Image" className="block h-[19px] w-full border border-[#5c9dc9] bg-white pb-px pl-px" />
                      <span className="absolute top-[2px] left-[59px] h-[15px] w-px bg-black" />
                    </div>
                    <button aria-label="Edit text" className="flex w-[16px] items-center justify-center border border-[#c6c1be] bg-[#f7f6f5] leading-none">...</button>
                    <button aria-label="Reset" className="flex w-[14px] items-center justify-center border border-[#c6c1be] bg-[#f7f6f5]">
                      <svg width="8" height="8" viewBox="0 0 8 8" aria-hidden="true"><path d="M0.500 3.500L3.500 1v5z" fill="#c0202a" /><path d="M3 3.500h3v3" fill="none" stroke="#c0202a" strokeWidth="1.200" /></svg>
                    </button>
                  </div>
                </td>
              </tr>
              {rowsAfter.map((r) => <PropertyRow key={r.name} row={r} />)}
            </tbody>
          </table>
        </div>
        <ScrollBar thumbPlace="mt-[126px] h-[29px] border-t" />
      </div>
    </section>
  );
}

/* ---------- application ---------- */

export default function App() {
  return (
    <div className="flex h-screen flex-col overflow-hidden bg-black font-['Noto_Sans',sans-serif] text-[14px] leading-[18px] text-[#141312]">
      <div className="flex min-h-0 flex-1">
        <Launcher />
        <div className="flex min-w-0 flex-1 flex-col bg-[#eeeae7]">
          <div className="relative flex h-[10px] shrink-0 items-end justify-center overflow-hidden bg-linear-to-b from-[#4b4a44] to-[#3e3d38]">
            <span className="pb-[2px] font-bold leading-[14px] text-[#dfdbd2]">Qt Designer</span>
            <span className="absolute right-[4px] bottom-[6px] flex gap-1">
              <span className="size-3 rounded-full bg-[#7b7a73]" />
              <span className="size-3 rounded-full bg-[#7b7a73]" />
              <span className="size-3 rounded-full bg-[#e0552e]" />
            </span>
          </div>
          <nav aria-label="Menu" className="flex h-[21px] shrink-0 items-center gap-[13px] border-b border-[#dfdad7] pl-2">
            {menus.map(([a, b, c]) => (
              <button key={a + b + c}>{a}<u className="underline-offset-2">{b}</u>{c}</button>
            ))}
          </nav>
          <div className="flex h-9 shrink-0 items-center border-b border-[#c9c4c1] bg-linear-to-b from-[#f7f5f4] to-[#ebe7e4] pb-px">
            {toolGroups.map((group, i) => (
              <div key={i} className="flex items-center">
                <Grip first={i === 0} />
                {group.map((t) => (
                  <button key={t.label} aria-label={t.label} aria-pressed={t.pressed} className={`flex h-[30px] w-[31px] items-center justify-center rounded-[3px] border ${t.pressed ? "border-[#c0bbb8] bg-[#dcd8d6]" : "border-transparent"}`}>
                    <Svg size={24} box={24}>{t.icon}</Svg>
                  </button>
                ))}
              </div>
            ))}
          </div>
          <div className="flex min-h-0 flex-1">
            <WidgetBox />
            <FormCanvas />
            <aside className="flex w-[463px] shrink-0 flex-col pl-[7px]">
              <ObjectInspector />
              <PropertyEditor />
            </aside>
          </div>
          <footer className="h-[22px] shrink-0" />
        </div>
      </div>
      <div className="h-[39px] shrink-0 bg-black" />
    </div>
  );
}
